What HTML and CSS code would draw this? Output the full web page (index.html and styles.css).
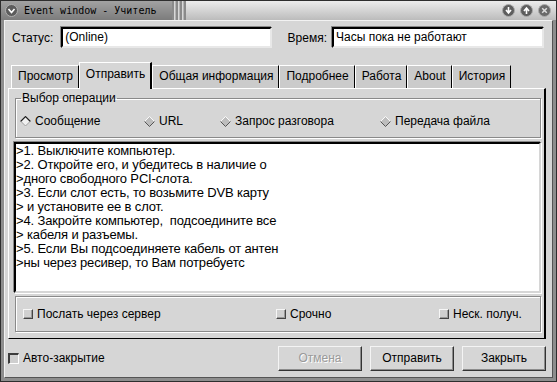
FILE: index.html
```html
<!DOCTYPE html>
<html lang="ru">
<head>
  <meta charset="UTF-8">
  <title>Event window - Учитель</title>
  <link rel="stylesheet" href="styles.css">
</head>
<body>
  <div class="window">
    <div class="titlebar">
      <div class="title-left">
        <svg class="title-icon" width="13" height="13" viewBox="0 0 13 13">
          <circle cx="6.5" cy="6.5" r="6" fill="#5c5c5c" stroke="#b0b0b0" stroke-width="1"/>
          <path d="M3.5 5 L6.5 8.5 L9.5 5" fill="none" stroke="#fff" stroke-width="1.6"/>
        </svg>
        <span class="title-text">Event window - Учитель</span>
      </div>
      <div class="title-ridges"></div>
      <div class="title-right">
        <svg class="title-btn" width="13" height="13" viewBox="0 0 13 13">
          <circle cx="6.5" cy="6.5" r="6" fill="#5e5e5e" stroke="#aaa" stroke-width="1"/>
          <path d="M6.5 3 V8 M4 6 L6.5 9 L9 6" fill="none" stroke="#fff" stroke-width="1.6"/>
        </svg>
        <svg class="title-btn" width="13" height="13" viewBox="0 0 13 13">
          <circle cx="6.5" cy="6.5" r="6" fill="#5e5e5e" stroke="#aaa" stroke-width="1"/>
          <path d="M6.5 10 V5 M4 7 L6.5 4 L9 7" fill="none" stroke="#fff" stroke-width="1.6"/>
        </svg>
        <svg class="title-btn" width="13" height="13" viewBox="0 0 13 13">
          <circle cx="6.5" cy="6.5" r="6" fill="#6a6a6a" stroke="#aaa" stroke-width="1"/>
          <path d="M4.2 4.2 L8.8 8.8 M8.8 4.2 L4.2 8.8" fill="none" stroke="#ddd" stroke-width="1.5"/>
        </svg>
      </div>
    </div>

    <div class="client">
      <div class="status-row">
        <span class="field-label">Статус:</span>
        <div class="field field-status">(Online)</div>
        <span class="field-label">Время:</span>
        <div class="field field-time">Часы пока не работают</div>
      </div>

      <div class="tabs">
        <div class="tab">Просмотр</div>
        <div class="tab active">Отправить</div>
        <div class="tab">Общая информация</div>
        <div class="tab">Подробнее</div>
        <div class="tab">Работа</div>
        <div class="tab">About</div>
        <div class="tab">История</div>
      </div>

      <div class="tab-panel">
        <fieldset class="group group-op">
          <legend>Выбор операции</legend>
          <div class="radio-row">
            <label class="radio radio-msg">
              <svg width="11" height="11" viewBox="0 0 11 11">
                <polygon points="5.5,0.5 10.5,5.5 5.5,10.5 0.5,5.5" fill="#f0f0f0"/>
                <path d="M0.6 5.5 L5.5 0.6 L10.4 5.5" fill="none" stroke="#1e1e1e" stroke-width="1.2"/>
                <path d="M1 5.5 L5.5 10 L10 5.5" fill="none" stroke="#9a9a9a" stroke-width="1"/>
              </svg>
              Сообщение
            </label>
            <label class="radio radio-url">
              <svg width="11" height="11" viewBox="0 0 11 11">
                <polygon points="5.5,0.5 10.5,5.5 5.5,10.5 0.5,5.5" fill="#bdbdbd"/>
                <path d="M0.5 5.5 L5.5 0.5 L10.5 5.5" fill="none" stroke="#fafafa" stroke-width="1"/>
                <path d="M0.5 5.5 L5.5 10.5 L10.5 5.5" fill="none" stroke="#555" stroke-width="1"/>
              </svg>
              URL
            </label>
            <label class="radio radio-talk">
              <svg width="11" height="11" viewBox="0 0 11 11">
                <polygon points="5.5,0.5 10.5,5.5 5.5,10.5 0.5,5.5" fill="#bdbdbd"/>
                <path d="M0.5 5.5 L5.5 0.5 L10.5 5.5" fill="none" stroke="#fafafa" stroke-width="1"/>
                <path d="M0.5 5.5 L5.5 10.5 L10.5 5.5" fill="none" stroke="#555" stroke-width="1"/>
              </svg>
              Запрос разговора
            </label>
            <label class="radio">
              <svg width="11" height="11" viewBox="0 0 11 11">
                <polygon points="5.5,0.5 10.5,5.5 5.5,10.5 0.5,5.5" fill="#bdbdbd"/>
                <path d="M0.5 5.5 L5.5 0.5 L10.5 5.5" fill="none" stroke="#fafafa" stroke-width="1"/>
                <path d="M0.5 5.5 L5.5 10.5 L10.5 5.5" fill="none" stroke="#555" stroke-width="1"/>
              </svg>
              Передача файла
            </label>
          </div>
        </fieldset>

        <div class="message">
          <div>&gt;1. Выключите компьютер.</div>
          <div>&gt;2. Откройте его, и убедитесь в наличие о</div>
          <div>&gt;дного свободного PCI-слота.</div>
          <div>&gt;3. Если слот есть, то возьмите DVB карту</div>
          <div>&gt; и установите ее в слот.</div>
          <div>&gt;4. Закройте компьютер,&nbsp; подсоедините все</div>
          <div>&gt; кабеля и разъемы.</div>
          <div>&gt;5. Если Вы подсоединяете кабель от антен</div>
          <div>&gt;ны через ресивер, то Вам потребуетс</div>
        </div>

        <div class="group group-options">
          <label class="check check-server"><span class="box box-raised"></span>Послать через сервер</label>
          <label class="check check-urgent"><span class="box box-raised"></span>Срочно</label>
          <label class="check"><span class="box box-raised"></span>Неск. получ.</label>
        </div>
      </div>

      <div class="footer">
        <label class="check"><span class="box box-sunken"></span>Авто-закрытие</label>
        <div class="buttons">
          <button class="btn" disabled>Отмена</button>
          <button class="btn">Отправить</button>
          <button class="btn">Закрыть</button>
        </div>
      </div>
    </div>
  </div>
</body>
</html>
```

FILE: styles.css
```css
:root {
  --face: #d6d6d6;
  --tab: #cbcbcb;
  --dark: #000;
  --light: #fff;
}
* {
  margin: 0;
  padding: 0;
  box-sizing: border-box;
}
body {
  font-family: 'Liberation Sans', Arial, sans-serif;
  font-size: 12px;
  color: #000;
  background: #d6d6d6;
}
.window {
  width: 557px;
  height: 382px;
  display: flex;
  flex-direction: column;
  background: #8e8e8e;
  border: 1px solid #2e2e2e;
  padding: 0 3px 3px;
}

/* title bar */
.titlebar {
  height: 19px;
  margin: 0 -3px;
  display: flex;
  align-items: stretch;
}
.title-left {
  width: 171px;
  display: flex;
  align-items: center;
  gap: 6px;
  padding-left: 4px;
  background: linear-gradient(#a2a2a2, #7c7c7c);
}
.title-text {
  font-family: 'DejaVu Sans Mono', 'Liberation Mono', monospace;
  font-size: 10px;
}
.title-ridges {
  width: 14px;
  background:
    repeating-linear-gradient(to right, #8a8a8a 0 2px, #d8d8d8 2px 3px, #b4b4b4 3px 4px),
    #ccc;
}
.title-right {
  flex: 1;
  display: flex;
  justify-content: flex-end;
  align-items: center;
  gap: 5px;
  padding-right: 5px;
  background: linear-gradient(#ececec, #bcbcbc);
}

/* client area */
.client {
  flex: 1;
  display: flex;
  flex-direction: column;
  background: var(--face);
  border: 1px solid;
  border-color: #f2f2f2 #555 #555 #f2f2f2;
}
.status-row {
  display: flex;
  align-items: center;
  padding: 6px 8px 0 7px;
  height: 27px;
}
.field-label {
  margin-right: 5px;
  white-space: nowrap;
}
.field {
  height: 21px;
  line-height: 17px;
  padding: 0 2px;
  background: #fff;
  border: 2px solid;
  border-color: #000 #e8e8e8 #e8e8e8 #000;
  box-shadow: -1px -1px 0 #888;
}
.field-status {
  width: 211px;
  margin-right: auto;
  margin-left: 3px;
}
.field-time { width: 212px; }

/* tabs */
.tabs {
  display: flex;
  align-items: flex-end;
  margin: 14px 0 0 6px;
  height: 26px;
  position: relative;
  z-index: 1;
}
.tab {
  height: 23px;
  padding: 0 5px 0 6px;
  line-height: 21px;
  white-space: nowrap;
  background: var(--tab);
  border-top: 1px solid var(--light);
  border-left: 1px solid var(--light);
  border-right: 1px solid var(--dark);
}
.tab.active {
  height: 27px;
  margin-bottom: -1px;
  line-height: 23px;
  background: var(--face);
  border-right: 2px solid var(--dark);
}
.tab-panel {
  margin: 0 6px 0 3px;
  height: 251px;
  display: flex;
  flex-direction: column;
  padding: 3px 3px 0 6px;
  border: 1px solid;
  border-color: var(--light) var(--dark) var(--dark) var(--light);
  border-right-width: 2px;
}

/* group boxes */
.group {
  border: 1px solid #8a8a8a;
  box-shadow: 1px 1px 0 var(--light), inset 1px 1px 0 var(--light);
}
.group-op {
  height: 46px;
  padding: 0 0 0 4px;
}
.group-op legend {
  margin-left: 1px;
  padding: 0 1px;
  line-height: 12px;
}
.radio-row {
  display: flex;
  align-items: center;
  height: 30px;
  margin-top: 2px;
}
.radio {
  display: flex;
  align-items: center;
  gap: 4px;
  white-space: nowrap;
}
.radio-msg { width: 124px; }
.radio-url { width: 76px; }
.radio-talk { width: 160px; }

.message {
  height: 151px;
  margin: 4px 0 3px -1px;
  padding: 0;
  background: #fff;
  font-size: 13px;
  line-height: 14px;
  letter-spacing: -0.15px;
  border: 2px solid;
  border-color: #000 #d6d6d6 #d6d6d6 #000;
  box-shadow: -1px -1px 0 #888, 1px 1px 0 var(--light);
}
.group-options {
  height: 36px;
  display: flex;
  align-items: center;
  padding-left: 7px;
}
.check {
  display: flex;
  align-items: center;
  gap: 4px;
  white-space: nowrap;
}
.check-server { width: 253px; }
.check-urgent { width: 163px; }
.box {
  width: 10px;
  height: 10px;
  border: 1px solid;
}
.box-raised {
  background: #d0d0d0;
  border-color: #f6f6f6 #444 #444 #f6f6f6;
  box-shadow: inset -1px -1px 0 #999;
}
.box-sunken {
  width: 11px;
  height: 11px;
  background: #cfcfcf;
  border-width: 2px 1px 1px 2px;
  border-color: #3c3c3c #fff #fff #3c3c3c;
}

/* footer */
.footer {
  flex: 1;
  display: flex;
  align-items: center;
  justify-content: space-between;
  padding: 0 6px 0 3px;
}
.buttons {
  display: flex;
  gap: 8px;
}
.btn {
  width: 84px;
  height: 25px;
  font-family: inherit;
  font-size: 12px;
  color: #000;
  background: var(--face);
  border: 1px solid;
  border-color: #f4f4f4 #333 #333 #f4f4f4;
  box-shadow: inset -1px -1px 0 #8c8c8c;
}
.btn:disabled {
  color: #9a9a9a;
  text-shadow: 1px 1px 0 #fff;
}
```
